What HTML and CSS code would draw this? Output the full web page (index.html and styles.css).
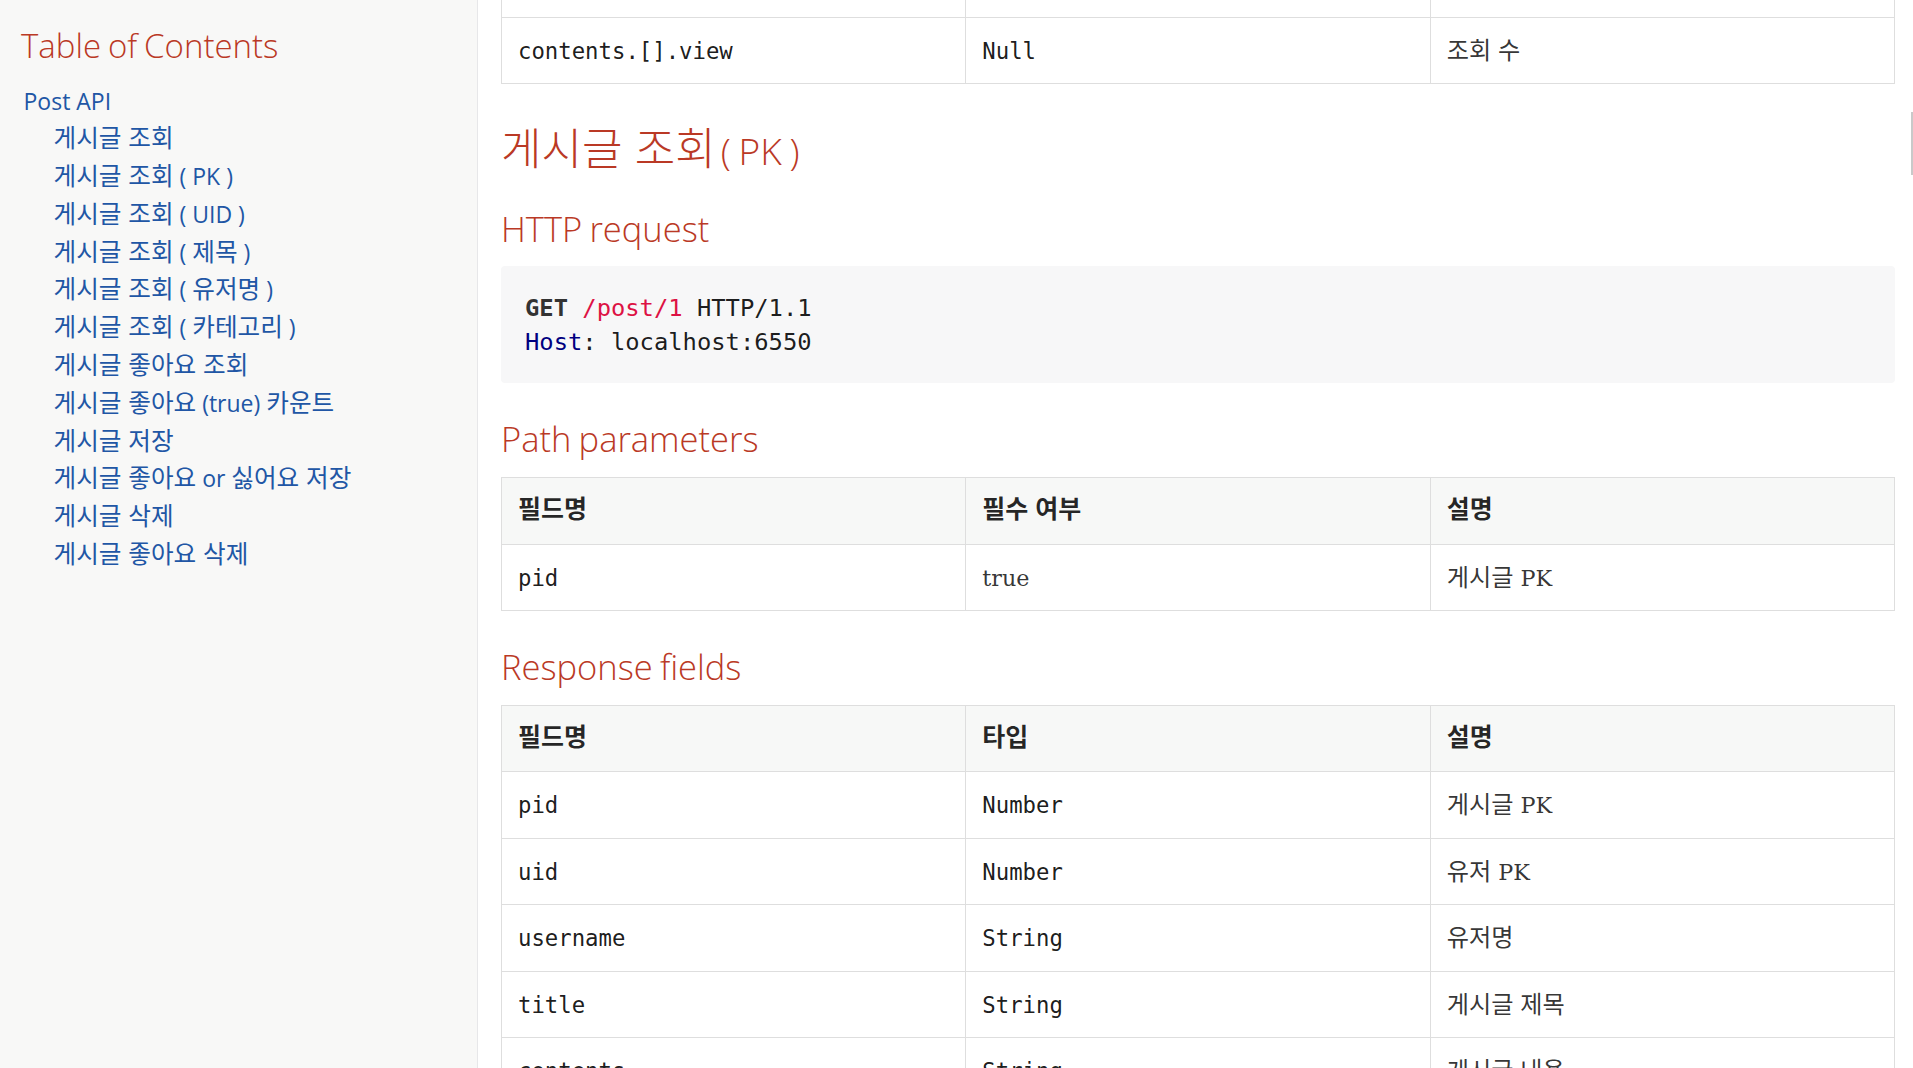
FILE: index.html
```html
<!DOCTYPE html>
<html lang="ko">
<head>
<meta charset="utf-8">
<title>Post API</title>
<link rel="stylesheet" href="styles.css">
</head>
<body>
<div class="page">
  <nav class="toc">
    <div class="toc-title">Table of Contents</div>
    <ul class="toc-l1">
      <li><a href="#post-api">Post API</a>
        <ul class="toc-l2">
          <li><a href="#1"><span class="ko">게시글 조회</span></a></li>
          <li><a href="#2"><span class="ko">게시글 조회</span> ( PK )</a></li>
          <li><a href="#3"><span class="ko">게시글 조회</span> ( UID )</a></li>
          <li><a href="#4"><span class="ko">게시글 조회</span> ( <span class="ko">제목</span> )</a></li>
          <li><a href="#5"><span class="ko">게시글 조회</span> ( <span class="ko">유저명</span> )</a></li>
          <li><a href="#6"><span class="ko">게시글 조회</span> ( <span class="ko">카테고리</span> )</a></li>
          <li><a href="#7"><span class="ko">게시글 좋아요 조회</span></a></li>
          <li><a href="#8"><span class="ko">게시글 좋아요</span> (true) <span class="ko">카운트</span></a></li>
          <li><a href="#9"><span class="ko">게시글 저장</span></a></li>
          <li><a href="#10"><span class="ko">게시글 좋아요</span> or <span class="ko">싫어요 저장</span></a></li>
          <li><a href="#11"><span class="ko">게시글 삭제</span></a></li>
          <li><a href="#12"><span class="ko">게시글 좋아요 삭제</span></a></li>
        </ul>
      </li>
    </ul>
  </nav>
  <main class="content">
    <table class="tbl tbl-cut">
      <tbody>
        <tr class="stub"><td></td><td></td><td></td></tr>
        <tr><td class="mono">contents.[].view</td><td class="mono">Null</td><td><span class="ko">조회 수</span></td></tr>
      </tbody>
    </table>

    <h2 class="h2"><span class="ko">게시글 조회</span>( PK )</h2>

    <h3 class="h3">HTTP request</h3>
    <pre class="listing"><span class="kw">GET</span> <span class="str">/post/1</span> HTTP/1.1
<span class="attr">Host</span>: localhost:6550</pre>

    <h3 class="h3">Path parameters</h3>
    <table class="tbl">
      <thead>
        <tr><th>필드명</th><th>필수 여부</th><th>설명</th></tr>
      </thead>
      <tbody>
        <tr><td class="mono">pid</td><td>true</td><td><span class="ko">게시글</span> PK</td></tr>
      </tbody>
    </table>

    <h3 class="h3">Response fields</h3>
    <table class="tbl tbl-last">
      <thead>
        <tr><th>필드명</th><th>타입</th><th>설명</th></tr>
      </thead>
      <tbody>
        <tr><td class="mono">pid</td><td class="mono">Number</td><td><span class="ko">게시글</span> PK</td></tr>
        <tr><td class="mono">uid</td><td class="mono">Number</td><td><span class="ko">유저</span> PK</td></tr>
        <tr><td class="mono">username</td><td class="mono">String</td><td><span class="ko">유저명</span></td></tr>
        <tr><td class="mono">title</td><td class="mono">String</td><td><span class="ko">게시글 제목</span></td></tr>
        <tr><td class="mono">contents</td><td class="mono">String</td><td><span class="ko">게시글 내용</span></td></tr>
      </tbody>
    </table>
  </main>
</div>
<div class="thumb"></div>
</body>
</html>
```

FILE: styles.css
```css
* { box-sizing: border-box; }

html, body {
  margin: 0;
  height: 100%;
  overflow: hidden;
  background: #fff;
}

body {
  font-family: "DejaVu Serif", "Noto Sans CJK KR", serif;
  color: rgba(0, 0, 0, .8);
}

.page {
  display: flex;
  height: 100%;
}

/* ---------- sidebar ---------- */
.toc {
  width: 478px;
  flex: none;
  background: #f8f8f7;
  border-right: 1px solid #e7e7e9;
  padding: 26px 21px 0;
}

.toc-title {
  font-family: "Open Sans", "Noto Sans CJK KR", sans-serif;
  font-weight: 300;
  font-size: 33px;
  line-height: 40px;
  color: #ba3925;
  word-spacing: -.05em;
  margin-bottom: 19.5px;
}

.toc ul {
  list-style: none;
  margin: 0;
  padding: 0;
  font-family: "Open Sans", "Noto Sans CJK KR", sans-serif;
  font-size: 23px;
}

.toc ul.toc-l1 { margin-left: 2.5px; }

.toc li {
  line-height: 30px;
  margin-top: 7.8px;
}

.toc ul.toc-l2 { padding-left: 30px; }

.toc a {
  color: #2156a5;
  text-decoration: none;
}

.toc .ko {
  font-family: "Noto Sans CJK KR", sans-serif;
  font-size: 24.6px;
  line-height: 0;
}

/* ---------- content ---------- */
.content {
  flex: 1;
  min-width: 0;
  padding: 0 18px 0 23px;
}

.h2, .h3 {
  font-family: "Open Sans", "Noto Sans CJK KR", sans-serif;
  font-weight: 300;
  color: #ba3925;
  margin: 0;
  word-spacing: -.05em;
}

.h2 {
  font-size: 37px;
  line-height: 44px;
  margin-top: 45px;
}

.h2 .ko {
  font-family: "Noto Sans CJK KR", sans-serif;
  font-size: 44px;
  line-height: 0;
  word-spacing: 0;
  margin-right: 5px;
}

.h3 {
  font-size: 34.5px;
  line-height: 40px;
  margin-top: 36px;
}

.listing {
  margin: 17px 0 0;
  background: #f7f7f8;
  border-radius: 4px;
  padding: 25px 24px 24px;
  font-family: "DejaVu Sans Mono", monospace;
  font-size: 23.8px;
  line-height: 34px;
  color: rgba(0, 0, 0, .9);
  white-space: pre;
}

.kw { font-weight: bold; color: #333; }
.str { color: #d14; }
.attr { color: #000080; }

.tbl {
  width: 100%;
  table-layout: fixed;
  border-collapse: separate;
  border-spacing: 0;
  border-top: 1px solid #dedede;
  border-left: 1px solid #dedede;
  margin-top: 18px;
}

.tbl-last { margin-top: 17.8px; }

.tbl td, .tbl th {
  border-right: 1px solid #dedede;
  border-bottom: 1px solid #dedede;
  padding: 16.1px 16px 15.3px;
  line-height: 34px;
  font-size: 22.3px;
  text-align: left;
  vertical-align: top;
  font-weight: 400;
}

.tbl th {
  background: #f7f8f7;
  font-family: "Noto Sans CJK KR", sans-serif;
  font-weight: 700;
  font-size: 25px;
  padding-top: 12px;
  padding-bottom: 19.4px;
  color: rgba(0, 0, 0, .85);
}

.tbl td.mono {
  font-family: "DejaVu Sans Mono", monospace;
  color: rgba(0, 0, 0, .9);
}

.tbl td .ko {
  font-family: "Noto Sans CJK KR", sans-serif;
  font-size: 24.2px;
  line-height: 0;
}

.tbl-cut {
  border-top: none;
  margin-top: 0;
}

.tbl-cut .stub td {
  padding: 0;
  height: 18px;
}

.thumb {
  position: fixed;
  right: 0;
  top: 112px;
  width: 2px;
  height: 63px;
  background: #c9c9c9;
}
```
